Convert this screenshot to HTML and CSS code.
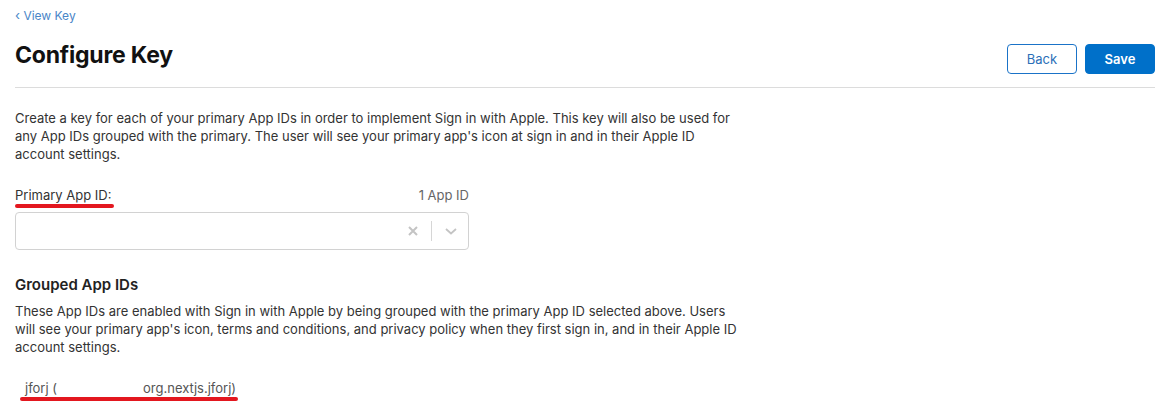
FILE: index.html
```html
<!DOCTYPE html>
<html lang="en">
<head>
<meta charset="utf-8">
<title>Configure Key</title>
<link rel="stylesheet" href="styles.css">
</head>
<body>
<div class="page">
  <a class="back-link" href="#"><span class="chev">‹</span> View Key</a>
  <header class="header">
    <h1 class="title">Configure Key</h1>
    <div class="actions">
      <button class="btn btn-secondary">Back</button>
      <button class="btn btn-primary">Save</button>
    </div>
  </header>
  <div class="content">
    <p class="desc">Create a key for each of your primary App IDs in order to implement Sign in with Apple. This key will also be used for any App IDs grouped with the primary. The user will see your primary app's icon at sign in and in their Apple ID account settings.</p>
    <div class="field">
      <div class="field-head">
        <span class="label marked">Primary App ID:</span>
        <span class="count">1 App ID</span>
      </div>
      <div class="select">
        <div class="select-value"></div>
        <div class="select-icons">
          <svg class="ic-x" width="12" height="12" viewBox="0 0 12 12"><path d="M2 2L10 10M10 2L2 10" stroke="#c4c4c4" stroke-width="2" fill="none"/></svg>
          <span class="sep"></span>
          <svg class="ic-chev" width="14" height="10" viewBox="0 0 14 10"><path d="M2 3L7 7.5L12 3" stroke="#c4c4c4" stroke-width="1.8" fill="none"/></svg>
        </div>
      </div>
    </div>
    <h2 class="subtitle">Grouped App IDs</h2>
    <p class="desc">These App IDs are enabled with Sign in with Apple by being grouped with the primary App ID selected above. Users will see your primary app's icon, terms and conditions, and privacy policy when they first sign in, and in their Apple ID account settings.</p>
    <div class="grouped">
      <div class="grouped-item">jforj (<span class="redact"></span>org.nextjs.jforj)</div>
      <div class="mark-line"></div>
    </div>
  </div>
</div>
</body>
</html>
```
FILE: styles.css
```css
html, body {
  margin: 0;
  padding: 0;
  background: #fff;
}
body {
  font-family: Inter, "Noto Sans", sans-serif;
  color: #333;
  font-size: 13px;
}
.page {
  padding: 7px 14px 20px 15px;
}
.back-link {
  display: block;
  color: #4a86c8;
  text-decoration: none;
  font-size: 12px;
  line-height: 16px;
}
.chev {
  font-size: 13px;
}
.header {
  display: flex;
  justify-content: space-between;
  align-items: flex-start;
  border-bottom: 1px solid #dcdcdc;
  padding-top: 20px;
  padding-bottom: 13px;
}
.title {
  margin: -3px 0 0;
  font-size: 23px;
  font-weight: 700;
  color: #111;
  line-height: 28px;
  letter-spacing: -0.2px;
}
.actions {
  display: flex;
  gap: 8px;
}
.btn {
  font-family: Inter, "Noto Sans", sans-serif;
  font-size: 13px;
  height: 30px;
  width: 70px;
  border-radius: 4px;
  cursor: pointer;
}
.btn-secondary {
  background: #fff;
  color: #2b6fb8;
  border: 1px solid #1a73c8;
}
.btn-primary {
  background: #0070c9;
  color: #fff;
  border: 1px solid #0070c9;
  font-weight: 600;
}
.content {
  max-width: 725px;
  padding-top: 21px;
}
.desc {
  margin: 0;
  line-height: 18px;
  font-size: 13px;
  color: #333;
}
.field {
  width: 454px;
  margin-top: 23px;
}
.field-head {
  display: flex;
  justify-content: space-between;
  align-items: baseline;
  line-height: 18px;
}
.label {
  color: #333;
}
.count {
  color: #666;
}
.marked {
  position: relative;
}
.marked::after {
  content: "";
  position: absolute;
  left: 0;
  right: -3px;
  bottom: -4px;
  height: 4px;
  border-radius: 2px;
  background: #e3171f;
}
.select {
  margin-top: 8px;
  height: 36px;
  border: 1px solid #d2d2d2;
  border-radius: 4px;
  display: flex;
  align-items: center;
}
.select-value {
  flex: 1;
}
.select-icons {
  display: flex;
  align-items: center;
  padding-right: 10px;
}
.ic-x {
  margin-right: 12px;
}
.sep {
  width: 1px;
  height: 20px;
  background: #d6d6d6;
  margin-right: 12px;
}
.subtitle {
  margin: 25px 0 7px;
  font-size: 15px;
  font-weight: 600;
  color: #222;
  line-height: 20px;
}
.grouped {
  margin-top: 23px;
  line-height: 18px;
  color: #555;
}
.grouped-item {
  padding-left: 10px;
}
.mark-line {
  width: 218px;
  height: 4px;
  margin-left: 5px;
  margin-top: 0;
  border-radius: 2px;
  background: #e3171f;
}
.redact {
  display: inline-block;
  width: 86px;
}
```
